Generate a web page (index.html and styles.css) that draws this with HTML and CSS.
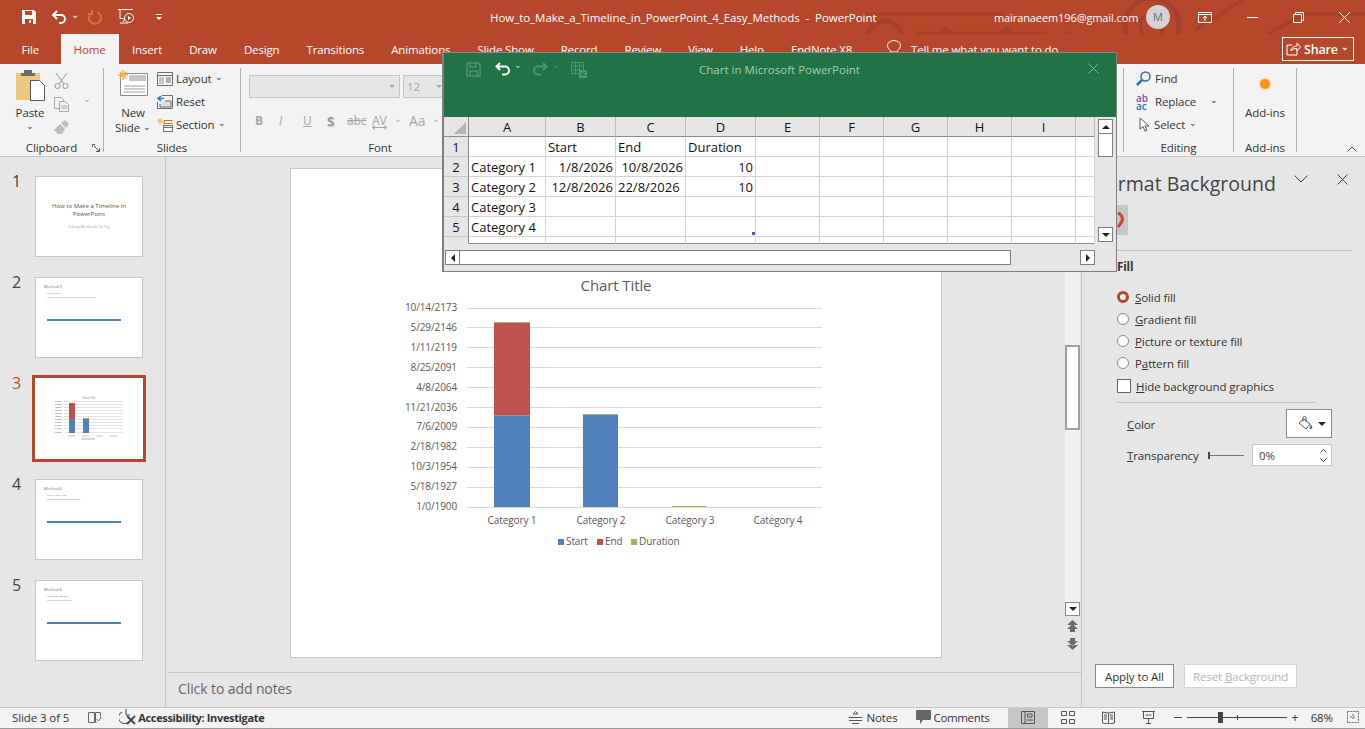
FILE: index.html
```html
<!DOCTYPE html>
<html lang="en">

<head>
  <meta charset="UTF-8" />
  <title>How_to_Make_a_Timeline_in_PowerPoint_4_Easy_Methods - PowerPoint</title>
  <link rel="stylesheet" href="styles.css">
</head>

<body>
  <header class="titlebar">
    <svg class="circuit" width="500" height="64" viewBox="0 0 500 64" fill="none" stroke="#a5402a" stroke-width="3">
      <circle cx="287" cy="25" r="27" stroke-width="5" />
      <circle cx="287" cy="25" r="12" />
      <circle cx="20" cy="38" r="17" stroke-width="5" />
      <path d="M0 14H140M52 33H180M180 33l17 17h80M240 44h50M330 30L390 -8M300 52L370 52L440 14H500M200 33h8" />
      <circle cx="141" cy="33" r="4" />
      <circle cx="81" cy="33" r="4" />
    </svg>
    <div class="qat">
      <svg width="16" height="16" viewBox="0 0 16 16"><path d="M1 1h12l2 2v12H1z" fill="#fff" /><path d="M4 2h7v4H4zM4 10h8v5H4z" fill="#b7472a" /><path d="M8 11h2v3H8z" fill="#fff" /></svg>
      <svg class="qat-undo" width="16" height="16" viewBox="0 0 16 16" fill="none" stroke="#fff" stroke-width="2"><path d="M6 2L2 6l4 4M2 6h8a4 4 0 0 1 0 8H8" /></svg>
      <span class="caret-w">⌄</span>
      <svg class="qat-redo" width="16" height="16" viewBox="0 0 16 16" fill="none" stroke="#e0694a" stroke-width="2"><path d="M11 3.500a6 6 0 1 1-6 0M5 1v4H1" /></svg>
      <svg class="qat-show" width="18" height="18" viewBox="0 0 18 18" fill="none" stroke="#fff"><path d="M0 1.500h15M2 1.500v9h5M5 14l2-3" /><circle cx="11" cy="10" r="4.500" /><path d="M10 8v4l3-2z" fill="#fff" stroke="none" /><path d="M2 15h8" /></svg>
      <svg class="qat-more" width="8" height="8" viewBox="0 0 8 8" fill="#fff"><path d="M1 1h6v1H1zM1 4h6L4 7z" /></svg>
    </div>
    <div class="doc-title">How_to_Make_a_Timeline_in_PowerPoint_4_Easy_Methods &nbsp;-&nbsp; PowerPoint</div>
    <div class="account">mairanaeem196@gmail.com</div>
    <div class="avatar">M</div>
    <div class="window-btns">
      <svg width="14" height="11" viewBox="0 0 14 11" fill="none" stroke="#fff"><path d="M.5.500h13v10H.5zM.5 2.500h13M7 9V4.500M5 6l2-2 2 2" /></svg>
      <svg width="11" height="11" viewBox="0 0 11 11" stroke="#fff"><path d="M0 5.500h11" /></svg>
      <svg width="11" height="11" viewBox="0 0 11 11" fill="none" stroke="#fff"><path d="M.5 2.500h8v8h-8zM2.500 2.500v-2h8v8h-2" /></svg>
      <svg width="11" height="11" viewBox="0 0 11 11" stroke="#fff"><path d="M0 0l11 11M11 0L0 11" /></svg>
    </div>
  </header>

  <nav class="tabs">
    <span class="tab tab-file">File</span>
    <span class="tab tab-home">Home</span>
    <span class="tab">Insert</span>
    <span class="tab">Draw</span>
    <span class="tab">Design</span>
    <span class="tab">Transitions</span>
    <span class="tab">Animations</span>
    <span class="tab">Slide Show</span>
    <span class="tab">Record</span>
    <span class="tab">Review</span>
    <span class="tab">View</span>
    <span class="tab">Help</span>
    <span class="tab">EndNote X8</span>
    <svg class="bulb" width="16" height="18" viewBox="0 0 16 18" fill="none" stroke="#fff"><path d="M5 12c0-2-3.500-3-3.500-6.500a6.500 5 0 0 1 13 0C14.500 9 11 10 11 12zM6 15h4" /></svg>
    <span class="tell">Tell me what you want to do</span>
    <span class="share">
      <svg width="15" height="14" viewBox="0 0 15 14" fill="none" stroke="#fff"><path d="M6 3H1v10h10V8M5 9c0-3 3-5 6-5V1l3.500 4L11 9V6.500C8 6.500 6 7 5 9z" /></svg>
      Share <span class="share-caret">⌄</span>
    </span>
  </nav>

  <section class="ribbon">
    <div class="group group-clipboard">
      <div class="group-body">
        <div class="big-btn paste">
          <svg width="30" height="32" viewBox="0 0 30 32"><path d="M1 4h24v27H1z" fill="#eec77f" /><path d="M9 1h8v3h3v3H6V4h3z" fill="#6b6b6b" /><path d="M15.500 11.500h9l5 5v15h-14z" fill="#fff" stroke="#555" /></svg>
          <span>Paste</span>
          <span class="caret">⌄</span>
        </div>
        <div class="tool-col">
          <svg width="15" height="16" viewBox="0 0 15 16" fill="none" stroke="#a9a9a9" stroke-width="1.200"><circle cx="3.500" cy="13" r="2.500" /><circle cx="11.500" cy="13" r="2.500" /><path d="M2 0l8 11M13 0L5 11" /></svg>
          <svg width="15" height="15" viewBox="0 0 15 15" fill="#f3f3f3" stroke="#a9a9a9"><path d="M.5.500h7l2 2v9h-9z" /><path d="M5.500 4.500h6l3 3v7h-9z" /><path d="M7 9h6M7 11h6" /></svg>
          <svg width="15" height="15" viewBox="0 0 15 15" fill="#bdbdbd"><path d="M0 10l6-6 5 5-3 5H4zM7 3l4-3 4 4-3 4z" /></svg>
        </div>
        <span class="copy-caret">⌄</span>
      </div>
      <div class="group-label">Clipboard
        <svg class="launcher" width="8" height="8" viewBox="0 0 8 8" fill="none" stroke="#555"><path d="M.5 3V.5H3M2 2l5 5M7.500 4v3.500H4" /></svg>
      </div>
    </div>

    <div class="group group-slides">
      <div class="group-body">
        <div class="big-btn new-slide">
          <svg width="32" height="28" viewBox="0 0 32 28"><path d="M3.500 4.500h27v22h-27z" fill="#fff" stroke="#8a8a8a" /><path d="M12 6h17v6H12z" fill="#c6c6c6" /><path d="M7 17h21M7 20h21M7 23h21" stroke="#9a9a9a" /><path d="M1 6h10M6 1v10M2.500 2.500l7 7M9.500 2.500l-7 7" stroke="#f2b84b" stroke-width="1.500" /></svg>
          <span>New</span>
          <span>Slide <span class="caret-inline">⌄</span></span>
        </div>
        <div class="small-col">
          <div class="small-btn">
            <svg width="16" height="14" viewBox="0 0 16 14" fill="none" stroke="#6b6b6b"><path d="M.5.500h15v13H.5zM.5 3.500h15" /><path d="M2 5h5v7H2z" fill="#c6c6c6" stroke="none" /><path d="M9 6h5M9 8h5M9 10h5" /></svg>
            Layout <span class="caret-inline">⌄</span>
          </div>
          <div class="small-btn">
            <svg width="16" height="14" viewBox="0 0 16 14" fill="none" stroke="#6b6b6b"><path d="M5 .500h10.500v13H.5V7" /><path d="M8 6h6v6H3V9" fill="#e0e0e0" /><path d="M4 1L1 3.500 4 6M1 3.500h6" stroke="#2f79c4" stroke-width="1.500" /></svg>
            Reset
          </div>
          <div class="small-btn">
            <svg width="16" height="14" viewBox="0 0 16 14" fill="none"><path d="M0 3h6M3 0v6M1 1l4 4M5 1L1 5" stroke="#f2b84b" /><path d="M7 2.500h8.500M7 2.500v3h8.500" stroke="#d56a1f" /><path d="M6.500 7.500h9v6h-9zM6.500 9.500h9" stroke="#6b6b6b" /></svg>
            Section <span class="caret-inline">⌄</span>
          </div>
        </div>
      </div>
      <div class="group-label">Slides</div>
    </div>

    <div class="group group-font">
      <div class="font-boxes">
        <div class="font-box font-name"><span class="box-arrow"></span></div>
        <div class="font-box font-size">12<span class="box-arrow"></span></div>
      </div>
      <div class="font-tools">
        <b>B</b><i>I</i><u>U</u><b class="tool-s">S</b><s class="tool-abc">abc</s>
        <span class="tool-av">AV<svg width="15" height="5" viewBox="0 0 15 5" fill="none" stroke="#a6a6a6"><path d="M0 2.500h15M3 .500l-3 2 3 2M12 .500l3 2-3 2" /></svg></span>
        <span class="grey-caret">⌄</span><span class="tool-aa">Aa</span><span class="grey-caret">⌄</span>
      </div>
      <div class="group-label">Font</div>
    </div>

    <div class="group group-hidden"></div>

    <div class="group group-editing">
      <div class="small-col editing-col">
        <div class="small-btn">
          <svg width="15" height="15" viewBox="0 0 15 15" fill="none" stroke="#2f6fb0" stroke-width="1.500"><circle cx="9.500" cy="5.500" r="4.500" /><path d="M6 9l-5 5" stroke-width="2.500" /></svg>
          Find
        </div>
        <div class="small-btn">
          <span class="replace-icon"><span class="re-ab">ab</span><span class="re-ac">ac</span></span>
          Replace <span class="caret-inline replace-caret">⌄</span>
        </div>
        <div class="small-btn select-btn">
          <svg width="11" height="15" viewBox="0 0 11 15" fill="#fff" stroke="#555"><path d="M1 1v11l3-2.500 2 4.500 2-1-2-4h4z" /></svg>
          Select <span class="caret-inline">⌄</span>
        </div>
      </div>
      <div class="group-label">Editing</div>
    </div>

    <div class="group group-addins">
      <div class="big-btn addins">
        <span class="addin-dot"></span>
        <span>Add-ins</span>
      </div>
      <div class="group-label">Add-ins</div>
    </div>

    <svg class="collapse" width="10" height="6" viewBox="0 0 10 6" fill="none" stroke="#444"><path d="M.5 5.500L5 1l4.500 4.500" /></svg>
  </section>

  <main class="workspace">
    <aside class="thumbs">
      <div class="thumb-row">
        <span class="thumb-num">1</span>
        <div class="thumb thumb-title">
          <p class="t-head">How to Make a Timeline in PowerPoint</p>
          <p class="t-sub">4 Easy Methods To Try</p>
        </div>
      </div>
      <div class="thumb-row">
        <span class="thumb-num">2</span>
        <div class="thumb thumb-method">
          <p class="m-head">Method 3</p>
          <p class="m-body">Start Slides<br>Use a timeline to schedule task overviews</p>
          <div class="m-line"></div>
        </div>
      </div>
      <div class="thumb-row row-active">
        <span class="thumb-num">3</span>
        <div class="thumb thumb-chart">
          <svg width="108" height="81" viewBox="0 0 108 81">
            <text x="54" y="21" font-size="3" text-anchor="middle" fill="#777">Chart Title</text>
            <path d="M29 23.500h59M29 26.500h59M29 29.500h59M29 32.500h59M29 35.500h59M29 38.500h59M29 41.500h59M29 44.500h59M29 47.500h59M29 50.500h59M29 54.500h59" stroke="#e4e4e4" />
            <path d="M20 23.500h7M20 26.500h7M20 29.500h7M20 32.500h7M20 35.500h7M20 38.500h7M20 41.500h7M20 44.500h7M20 47.500h7M20 50.500h7M20 54.500h7" stroke="#c4c4c4" />
            <rect x="34" y="41" width="6" height="14" fill="#4f81bd" />
            <rect x="34" y="25" width="6" height="16" fill="#c0504d" />
            <rect x="48" y="41" width="6" height="14" fill="#4f81bd" />
            <rect x="48" y="40" width="6" height="1" fill="#9bbb59" />
            <path d="M33 58h7M47 58h7M61 58h7M75 58h7" stroke="#c4c4c4" />
            <path d="M46 61h14" stroke="#aab" />
          </svg>
        </div>
      </div>
      <div class="thumb-row">
        <span class="thumb-num">4</span>
        <div class="thumb thumb-method">
          <p class="m-head">Method 4</p>
          <p class="m-body">Gantt Chart View<br>Show tasks and dates clearly</p>
          <div class="m-line"></div>
        </div>
      </div>
      <div class="thumb-row">
        <span class="thumb-num">5</span>
        <div class="thumb thumb-method">
          <p class="m-head">Method 4</p>
          <p class="m-body">Use Chart Option<br>Display start and end</p>
          <div class="m-line"></div>
        </div>
      </div>
    </aside>

    <div class="center">
      <div class="stage">
        <div class="slide">
          <svg class="chart" width="650" height="488" viewBox="291 169 650 488">
            <text class="chart-title" x="616" y="291" text-anchor="middle">Chart Title</text>
            <g stroke="#d9d9d9">
              <path d="M467 308.500h355M467 327.500h355M467 347.500h355M467 367.500h355M467 387.500h355M467 407.500h355M467 427.500h355M467 447.500h355M467 467.500h355M467 487.500h355M467 507.500h355" />
            </g>
            <g class="axis" text-anchor="end">
              <text x="457" y="311">10/14/2173</text>
              <text x="457" y="331">5/29/2146</text>
              <text x="457" y="351">1/11/2119</text>
              <text x="457" y="371">8/25/2091</text>
              <text x="457" y="391">4/8/2064</text>
              <text x="457" y="411">11/21/2036</text>
              <text x="457" y="430">7/6/2009</text>
              <text x="457" y="450">2/18/1982</text>
              <text x="457" y="470">10/3/1954</text>
              <text x="457" y="490">5/18/1927</text>
              <text x="457" y="510">1/0/1900</text>
            </g>
            <rect x="494" y="415.500" width="36" height="91.500" fill="#4f81bd" />
            <rect x="494" y="323" width="36" height="92.500" fill="#c0504d" />
            <rect x="494" y="322" width="36" height="1" fill="#9bbb59" />
            <rect x="583" y="415" width="35" height="92" fill="#4f81bd" />
            <rect x="583" y="414" width="35" height="1" fill="#9bbb59" />
            <rect x="672" y="506" width="35" height="1" fill="#9bbb59" />
            <g class="axis" text-anchor="middle">
              <text x="512" y="524">Category 1</text>
              <text x="601" y="524">Category 2</text>
              <text x="690" y="524">Category 3</text>
              <text x="778" y="524">Category 4</text>
            </g>
            <rect x="558" y="539" width="6" height="6" fill="#4f81bd" />
            <rect x="597" y="539" width="6" height="6" fill="#c0504d" />
            <rect x="631" y="539" width="6" height="6" fill="#9bbb59" />
            <g class="axis">
              <text x="566" y="545">Start</text>
              <text x="605" y="545">End</text>
              <text x="639" y="545">Duration</text>
            </g>
          </svg>
        </div>
        <div class="vscroll">
          <div class="vtrack"><div class="vthumb"></div></div>
          <div class="varrow"><span class="tri-down"></span></div>
          <svg class="page-btn" width="11" height="13" viewBox="0 0 11 13" fill="#6b6b6b"><path d="M5.500 0L11 5H0zM5.500 4L11 9H8v3H3V9H0z" /></svg>
          <svg class="page-btn" width="11" height="13" viewBox="0 0 11 13" fill="#6b6b6b"><path d="M3 1h5v3h3L5.500 9 0 4h3zM0 8l5.500 5L11 8z" /></svg>
        </div>
      </div>
      <div class="notes">Click to add notes</div>
    </div>

    <aside class="pane">
      <div class="pane-head">
        <span class="pane-title">Format Background</span>
        <svg class="pane-chev" width="14" height="8" viewBox="0 0 14 8" fill="none" stroke="#444"><path d="M.5.500L7 7 13.500.500" /></svg>
        <svg class="pane-close" width="11" height="11" viewBox="0 0 11 11" stroke="#444"><path d="M.5.500l10 10M10.500.500l-10 10" /></svg>
      </div>
      <div class="pane-tab">
        <svg width="8" height="16" viewBox="0 0 8 16" fill="none" stroke="#c8482a" stroke-width="3"><path d="M1 1c4 2 5 5 4 8-1 2-2 4-4 6" /></svg>
      </div>
      <div class="pane-rule"></div>
      <div class="fill-head">Fill</div>
      <div class="fill-options">
        <label class="opt"><span class="radio radio-on"></span><span><u>S</u>olid fill</span></label>
        <label class="opt"><span class="radio"></span><span><u>G</u>radient fill</span></label>
        <label class="opt"><span class="radio"></span><span><u>P</u>icture or texture fill</span></label>
        <label class="opt"><span class="radio"></span><span>P<u>a</u>ttern fill</span></label>
        <label class="opt opt-check"><span class="check"></span><span><u>H</u>ide background graphics</span></label>
      </div>
      <div class="pane-rule rule-short"></div>
      <div class="color-row">
        <span class="color-label"><u>C</u>olor</span>
        <span class="color-btn">
          <svg width="15" height="15" viewBox="0 0 15 15" fill="#fff" stroke="#555"><path d="M1 7l5-4 6 5-4 5z" /><path d="M5 5V2a1.500 1.500 0 0 1 3 0v4" fill="none" /><path d="M12.500 8l2 3-1 2h-2z" fill="#2f79c4" stroke="none" /></svg>
          <span class="tri-down"></span>
        </span>
      </div>
      <div class="trans-row">
        <span class="trans-label"><u>T</u>ransparency</span>
        <span class="slider"></span>
        <span class="spin">0%<span class="spin-arrows"><svg width="7" height="4" viewBox="0 0 7 4" fill="none" stroke="#444"><path d="M.5 3.500l3-3 3 3" /></svg><svg width="7" height="4" viewBox="0 0 7 4" fill="none" stroke="#444"><path d="M.5.500l3 3 3-3" /></svg></span></span>
      </div>
      <div class="pane-actions">
        <span class="btn btn-apply">App<u>l</u>y to All</span>
        <span class="btn btn-off">Reset <u>B</u>ackground</span>
      </div>
    </aside>
  </main>

  <footer class="statusbar">
    <span class="slide-count">Slide 3 of 5</span>
    <svg class="st-book" width="14" height="13" viewBox="0 0 14 13" fill="none" stroke="#666"><path d="M6.500 1.500H.5v10h6zM7.500 1.500h5v4M7.500 1.500v10h1M8.500 8l2 2 3-4" /></svg>
    <svg class="st-access" width="17" height="16" viewBox="0 0 17 16" fill="none" stroke="#444"><path d="M7 0v6M3 3a6 6 0 0 0 5 11" /><path d="M7 6h4" /><path d="M8 7l8 8M16 7l-8 8" stroke-width="1.800" /></svg>
    <b class="st-investigate">Accessibility: Investigate</b>
    <span class="st-right">
      <span class="st-item st-notes">
        <svg width="13" height="13" viewBox="0 0 13 13" stroke="#555" fill="none"><path d="M4 3l2.500-2.500L9 3zM0 6.500h13M0 9.500h13M3 12.500h7" /></svg>
        Notes
      </span>
      <span class="st-item st-comments">
        <svg width="15" height="15" viewBox="0 0 15 15" fill="#666"><path d="M1 0h13a1 1 0 0 1 1 1v8a1 1 0 0 1-1 1H7l-3 4v-4H1a1 1 0 0 1-1-1V1a1 1 0 0 1 1-1z" /></svg>
        Comments
      </span>
      <span class="view view-on"><svg width="14" height="13" viewBox="0 0 14 13" fill="none" stroke="#555"><path d="M.5.500h13v12H.5zM4 .500v12M6.500 3h4.500v3H6.500zM6 9h6" /></svg></span>
      <span class="view"><svg width="14" height="13" viewBox="0 0 14 13" fill="none" stroke="#555"><path d="M.5.500h5v4h-5zM8.500.500h5v4h-5zM.5 8.500h5v4h-5zM8.500 8.500h5v4h-5z" /></svg></span>
      <span class="view"><svg width="13" height="13" viewBox="0 0 13 13" fill="none" stroke="#555"><path d="M.5 1l6 1 6-1v11l-6 1-6-1zM6.500 2v11M2 4h3M2 6h3M2 8h3M8 4h3M8 6h3M8 8h3" /></svg></span>
      <span class="view"><svg width="13" height="13" viewBox="0 0 13 13" fill="none" stroke="#555"><path d="M0 .500h13M1.500 .500v7h10v-7M3.500 4h6M6.500 7.500v5M4 12.500h5" /></svg></span>
      <span class="zoom-minus"></span>
      <span class="zoom-track"><span class="zoom-knob"></span><span class="zoom-tick"></span></span>
      <span class="zoom-plus">+</span>
      <span class="zoom-val">68%</span>
      <svg class="zoom-fit" width="12" height="12" viewBox="0 0 12 12" fill="none" stroke="#666"><path d="M.5.500h11v11H.5zM3 6h6M6 3v6" stroke-dasharray="2 1" /></svg>
    </span>
  </footer>

  <div class="xl-window">
    <div class="xl-title">
      <svg width="15" height="15" viewBox="0 0 15 15" fill="none" stroke="#4f9470" stroke-width="1.500"><path d="M1 1h11l2 2v11H1zM4 1v4h6V1M4 14V9h7v5" /></svg>
      <svg class="xl-undo" width="15" height="14" viewBox="0 0 15 14" fill="none" stroke="#fff" stroke-width="2"><path d="M5 1L1.500 4.500 5 8M2 4.500h8a4 4 0 0 1 0 8H7" /></svg>
      <span class="xl-caret xl-caret-on">⌄</span>
      <svg width="15" height="14" viewBox="0 0 15 14" fill="none" stroke="#4f9470" stroke-width="2"><path d="M10 1l3.500 3.500L10 8M13 4.500H5a4 4 0 0 0 0 8h3" /></svg>
      <span class="xl-caret">⌄</span>
      <svg class="xl-grid-icon" width="16" height="16" viewBox="0 0 16 16" fill="none" stroke="#4f9470"><path d="M.5.500h12v11H.5zM.5 4h12M.5 8h8M4.500 .500v11M8.500 .500v11" /><path d="M8 8h8v8H8z" fill="#4f9470" stroke="none" /><path d="M10 10l4 4M14 10l-4 4" stroke="#217346" /></svg>
      <span class="xl-name">Chart in Microsoft PowerPoint</span>
      <svg class="xl-close" width="11" height="11" viewBox="0 0 11 11" stroke="#7fb69a"><path d="M.5.500l10 10M10.500.500l-10 10" /></svg>
    </div>
    <div class="xl-body">
      <table class="sheet">
        <colgroup>
          <col class="c-row"><col class="c-a"><col class="c-bd"><col class="c-bd"><col class="c-bd"><col class="c-e"><col class="c-e"><col class="c-e"><col class="c-e"><col class="c-e"><col class="c-j">
        </colgroup>
        <tr class="head">
          <th class="corner"><span class="corner-tri"></span></th><th>A</th><th>B</th><th>C</th><th>D</th><th>E</th><th>F</th><th>G</th><th>H</th><th>I</th><th></th>
        </tr>
        <tr><th>1</th><td></td><td>Start</td><td>End</td><td>Duration</td><td></td><td></td><td></td><td></td><td></td><td></td></tr>
        <tr><th>2</th><td>Category 1</td><td class="num">1/8/2026</td><td class="num">10/8/2026</td><td class="num">10</td><td></td><td></td><td></td><td></td><td></td><td></td></tr>
        <tr><th>3</th><td>Category 2</td><td class="num">12/8/2026</td><td>22/8/2026</td><td class="num">10</td><td></td><td></td><td></td><td></td><td></td><td></td></tr>
        <tr><th>4</th><td>Category 3</td><td></td><td></td><td></td><td></td><td></td><td></td><td></td><td></td><td></td></tr>
        <tr><th>5</th><td>Category 4</td><td></td><td></td><td class="range-end"></td><td></td><td></td><td></td><td></td><td></td><td></td></tr>
        <tr class="cut"><th></th><td></td><td></td><td></td><td></td><td></td><td></td><td></td><td></td><td></td><td></td></tr>
      </table>
      <div class="xl-vscroll">
        <div class="xl-btn"><span class="tri-up"></span></div>
        <div class="xl-vthumb"></div>
        <div class="xl-btn xl-btn-end"><span class="tri-down"></span></div>
      </div>
    </div>
    <div class="xl-hscroll">
      <div class="xl-btn"><span class="tri-left"></span></div>
      <div class="xl-hthumb"></div>
      <div class="xl-btn xl-btn-end"><span class="tri-right"></span></div>
    </div>
  </div>
</body>

</html>
```

FILE: styles.css
```css
body {
  margin: 0;
  width: 1365px;
  height: 729px;
  overflow: hidden;
  position: relative;
  display: flex;
  flex-direction: column;
  background: #e6e6e6;
  font-family: "Open Sans", "Noto Sans", sans-serif;
  font-size: 11.5px;
  letter-spacing: -0.1px;
  color: #333;
}

p {
  margin: 0;
}

/* title bar */
.titlebar {
  position: relative;
  height: 34px;
  display: flex;
  align-items: center;
  background: #b7472a;
  color: #fff;
}

.circuit {
  position: absolute;
  top: 0;
  left: 865px;
}

.qat {
  width: 490px;
  flex: none;
  display: flex;
  align-items: center;
  padding-left: 21px;
  box-sizing: border-box;
  position: relative;
}

.qat-undo {
  margin-left: 14px;
}

.caret-w {
  margin: -6px 0 0 4px;
  font-size: 10px;
}

.qat-redo {
  margin-left: 8px;
}

.qat-show {
  margin-left: 15px;
}

.qat-more {
  margin-left: 19px;
}

.doc-title {
  position: relative;
  width: 504px;
  flex: none;
  white-space: nowrap;
  letter-spacing: -0.04px;
}

.account {
  position: relative;
  width: 152px;
  flex: none;
  font-size: 11px;
}

.avatar {
  position: relative;
  width: 24px;
  height: 24px;
  flex: none;
  border-radius: 50%;
  background: #d3d3d3;
  color: #6f6f7f;
  font-size: 11px;
  line-height: 24px;
  text-align: center;
}

.window-btns {
  position: relative;
  display: flex;
  align-items: center;
  gap: 35px;
  margin-left: 28px;
}

/* tabs */
.tabs {
  position: relative;
  height: 30px;
  display: flex;
  align-items: flex-end;
  background: #b7472a;
  color: #fff;
  letter-spacing: -0.15px;
}

.tab {
  padding: 0 13.5px;
  height: 30px;
  line-height: 31px;
  position: relative;
}

.tab-file {
  margin: 0 8px 0 8px;
}

.tab-home {
  padding: 0 13px;
  margin-right: 0;
  background: #f3f3f3;
  color: #b7472a;
}

.bulb {
  position: absolute;
  left: 886px;
  top: 6px;
}

.tell {
  position: absolute;
  left: 911px;
  top: 0;
  line-height: 31px;
}

.share {
  position: absolute;
  left: 1282px;
  top: 3px;
  width: 72px;
  height: 24px;
  box-sizing: border-box;
  border: 1px solid #fff;
  display: flex;
  align-items: center;
  gap: 3px;
  padding-left: 3px;
  font-size: 12.5px;
  font-weight: 600;
}

.share-caret {
  font-size: 9px;
  margin-top: -5px;
}

/* ribbon */
.ribbon {
  position: relative;
  height: 93px;
  flex: none;
  box-sizing: border-box;
  display: flex;
  background: #f3f3f3;
  border-bottom: 1px solid #c6c6c6;
  padding: 0 68px 4px 0;
}

.group {
  box-sizing: border-box;
  margin-top: 4px;
  display: flex;
  flex-direction: column;
  border-right: 1px solid #b1b1b1;
  position: relative;
}

.group-body {
  flex: 1;
  display: flex;
  min-height: 0;
}

.group-label {
  height: 16px;
  margin-bottom: -4px;
  text-align: center;
  line-height: 16px;
  position: relative;
}

.launcher {
  position: absolute;
  right: 3px;
  top: 4px;
}

.big-btn {
  display: flex;
  flex-direction: column;
  align-items: center;
  line-height: 15px;
  white-space: nowrap;
}

.big-btn svg {
  margin-bottom: 4px;
}

.caret,
.caret-inline {
  font-size: 9px;
}

.caret {
  line-height: 11px;
}

.caret-inline {
  position: relative;
  top: -2px;
}

.group-clipboard {
  width: 104px;
}

.paste {
  margin: 1px 0 0 14px;
  width: 32px;
}

.tool-col {
  margin: 5px 0 0 8px;
  display: flex;
  flex-direction: column;
  gap: 8px;
}

.copy-caret {
  margin: 24px 0 0 14px;
  font-size: 9px;
  color: #999;
}

.group-slides {
  width: 137px;
}

.new-slide {
  margin: 1px 0 0 13px;
  width: 32px;
}

.new-slide svg {
  margin-bottom: 8px;
}

.small-col {
  margin: 2px 0 0 8px;
  display: flex;
  flex-direction: column;
  gap: 6px;
}

.small-btn {
  height: 17px;
  display: flex;
  align-items: center;
  gap: 3px;
  white-space: nowrap;
}

.group-font {
  width: 270px;
  padding-left: 8px;
  border-right: none;
}

.font-boxes {
  display: flex;
  gap: 3px;
  margin-top: 7px;
}

.font-box {
  position: relative;
  height: 23px;
  box-sizing: border-box;
  background: #e6e6e6;
  border: 1px solid #c6c6c6;
  color: #a6a6a6;
  line-height: 21px;
  padding-left: 3px;
}

.font-name {
  width: 151px;
}

.font-size {
  width: 44px;
}

.box-arrow {
  position: absolute;
  right: 4px;
  top: 9px;
  border: 3px solid transparent;
  border-top-color: #a6a6a6;
}

.font-tools {
  flex: 1;
  display: flex;
  align-items: center;
  padding: 3px 0 0 6px;
  color: #a6a6a6;
  font-size: 12px;
  white-space: nowrap;
}

.font-tools > * {
  width: 24px;
  flex: none;
}

.font-tools .tool-s {
  width: 20px;
  color: #9a9a9a;
  font-size: 13px;
  text-shadow: 1px 1px 1px #c6c6c6;
}

.font-tools .tool-abc {
  width: 25px;
}

.font-tools .tool-av {
  position: relative;
  width: 22px;
}

.tool-av svg {
  position: absolute;
  left: 0;
  top: 13px;
}

.font-tools .tool-aa {
  width: 23px;
  font-size: 14px;
}

.font-tools .grey-caret {
  width: 15px;
  font-size: 9px;
  margin-top: -5px;
}

.group-hidden {
  flex: 1;
}

.group-editing {
  width: 110px;
}

.editing-col {
  flex: 1;
  margin-left: 12px;
}

.editing-col .small-btn {
  gap: 4px;
}

.replace-icon {
  width: 15px;
  display: flex;
  flex-direction: column;
  font-size: 10px;
  font-weight: 600;
  line-height: 8px;
}

.re-ab {
  color: #7a4fa6;
}

.re-ac {
  color: #2f6fb0;
}

.replace-caret {
  margin-left: 10px;
}

.select-btn {
  margin-left: 3px;
}

.group-addins {
  width: 63px;
}

.addins {
  flex: 1;
  padding-top: 11px;
}

.addin-dot {
  width: 10px;
  height: 10px;
  margin-bottom: 16px;
  border-radius: 50%;
  background: #f7941d;
  box-shadow: 0 0 3px #fbb040;
}

.collapse {
  position: absolute;
  left: 1347px;
  top: 82px;
}

/* main area */
.workspace {
  flex: 1;
  min-height: 0;
  display: flex;
}

.thumbs {
  width: 166px;
  box-sizing: border-box;
  flex: none;
  border-right: 1px solid #c6c6c6;
  padding-top: 19px;
  display: flex;
  flex-direction: column;
  gap: 20px;
}

.thumb-row {
  display: flex;
  padding-left: 12px;
}

.thumb-num {
  width: 23px;
  margin-top: -5px;
  font-size: 16px;
  line-height: 20px;
  color: #444;
}

.thumb {
  width: 108px;
  height: 81px;
  box-sizing: border-box;
  background: #fff;
  border: 1px solid #c6c6c6;
  overflow: hidden;
}

.row-active {
  margin: -3px 0;
}

.row-active .thumb-num {
  color: #c8482a;
  margin-top: -2px;
}

.row-active .thumb {
  width: 114px;
  height: 87px;
  margin-left: -3px;
  border: 3px solid #b7472a;
}

.row-active .thumb svg {
  display: block;
}

.thumb-title {
  padding-top: 25px;
  text-align: center;
}

.t-head {
  font-size: 6px;
  line-height: 8px;
  padding: 0 10px;
  color: #555;
  letter-spacing: 0;
}

.t-sub {
  margin-top: 6px;
  font-size: 4px;
  line-height: 5px;
  color: #999;
  letter-spacing: 0;
}

.thumb-method {
  padding: 6px 0 0 8px;
}

.m-head {
  font-size: 4px;
  line-height: 5px;
  color: #7a6a7a;
  letter-spacing: 0;
}

.m-body {
  margin: 2px 0 0 3px;
  font-size: 2.500px;
  line-height: 4px;
  color: #888;
  letter-spacing: 0;
}

.m-line {
  width: 74px;
  height: 2px;
  margin: 20px 0 0 3px;
  background: #4f81bd;
}

.center {
  flex: 1;
  min-width: 0;
  display: flex;
  flex-direction: column;
}

.stage {
  height: 515px;
  flex: none;
  display: flex;
  box-sizing: border-box;
  padding: 11px 0 0 124px;
}

.slide {
  width: 652px;
  height: 490px;
  box-sizing: border-box;
  background: #fff;
  border: 1px solid #c6c6c6;
}

.chart {
  display: block;
  font-family: "Open Sans", sans-serif;
}

.chart-title {
  font-size: 15px;
  fill: #595959;
}

.axis {
  font-size: 10px;
  fill: #595959;
}

.vscroll {
  width: 15px;
  margin: -11px 0 0 123px;
  display: flex;
  flex-direction: column;
  align-items: center;
}

.vtrack {
  width: 15px;
  height: 445px;
  flex: none;
  box-sizing: border-box;
  padding-top: 188px;
  background: #f0f0f0;
}

.vthumb {
  width: 15px;
  height: 85px;
  box-sizing: border-box;
  background: #fff;
  border: 2px solid #a0a0a0;
}

.varrow {
  width: 15px;
  height: 14px;
  box-sizing: border-box;
  background: #fff;
  border: 1px solid #8a8a8a;
  display: flex;
  align-items: center;
  justify-content: center;
}

.page-btn {
  margin-top: 4px;
}

.tri-down,
.tri-up,
.tri-left,
.tri-right {
  width: 0;
  height: 0;
  border: 4px solid transparent;
}

.tri-down {
  border-top-color: #222;
  margin-top: 4px;
}

.tri-up {
  border-bottom-color: #222;
  margin-bottom: 4px;
}

.tri-left {
  border-right-color: #222;
  margin-right: 4px;
}

.tri-right {
  border-left-color: #222;
  margin-left: 4px;
}

.notes {
  flex: 1;
  margin-left: 2px;
  border-top: 1px solid #c6c6c6;
  padding-left: 10px;
  font-size: 14px;
  line-height: 31px;
  color: #666;
}

/* format pane */
.pane {
  width: 284px;
  flex: none;
  box-sizing: border-box;
  display: flex;
  flex-direction: column;
  border-left: 1px solid #c6c6c6;
}

.pane-head {
  height: 48px;
  display: flex;
  align-items: center;
  padding: 0 17px 0 14px;
  flex: none;
}

.pane-title {
  font-size: 19.5px;
  color: #444;
  white-space: nowrap;
  margin-top: 5px;
  letter-spacing: 0;
}

.pane-chev {
  margin: -4px 0 0 auto;
}

.pane-close {
  margin: -4px 0 0 29px;
}

.pane-tab {
  width: 46px;
  height: 30px;
  flex: none;
  background: #c6c6c6;
  display: flex;
  align-items: center;
  justify-content: flex-end;
  padding-right: 3px;
  box-sizing: border-box;
}

.pane-rule {
  height: 1px;
  flex: none;
  margin: 15px 13px 0 34px;
  background: #c6c6c6;
}

.fill-head {
  margin: 8px 0 0 35px;
  font-weight: 700;
  line-height: 16px;
}

.fill-options {
  margin: 14px 0 0 35px;
  display: flex;
  flex-direction: column;
  gap: 6px;
}

.opt {
  height: 16px;
  display: flex;
  align-items: center;
  gap: 6px;
  white-space: nowrap;
}

.radio {
  width: 12px;
  height: 12px;
  box-sizing: border-box;
  border: 1px solid #8a8a8a;
  border-radius: 50%;
  background: #fff;
}

.radio-on {
  border: 3.500px solid #b7472a;
}

.opt-check {
  margin-top: 1px;
}

.check {
  width: 12px;
  height: 12px;
  border: 1px solid #666;
  background: #fff;
  margin-right: -1px;
}

.rule-short {
  margin: 8px 49px 0 35px;
}

.color-row,
.trans-row {
  display: flex;
  align-items: center;
  margin: 6px 0 0 45px;
  width: 205px;
}

.color-row {
  justify-content: space-between;
  height: 29px;
}

.color-label {
  margin-top: 2px;
}

.color-btn {
  width: 46px;
  height: 29px;
  box-sizing: border-box;
  border: 1px solid #8a8a8a;
  background: #fff;
  display: flex;
  align-items: center;
  padding-left: 11px;
  gap: 5px;
}

.trans-row {
  height: 22px;
}

.trans-label {
  width: 70px;
  flex: none;
}

.slider {
  width: 36px;
  height: 7px;
  margin-left: 11px;
  box-sizing: border-box;
  border-left: 2px solid #444;
  background: linear-gradient(#777, #777) center / 100% 1px no-repeat;
}

.spin {
  width: 80px;
  height: 22px;
  box-sizing: border-box;
  margin-left: 8px;
  border: 1px solid #c6c6c6;
  background: #fff;
  display: flex;
  align-items: center;
  justify-content: space-between;
  padding: 0 4px 0 6px;
  color: #444;
}

.spin-arrows {
  display: flex;
  flex-direction: column;
  gap: 5px;
}

.spin-arrows svg {
  display: block;
}

.pane-actions {
  margin: auto 0 19px 13px;
  display: flex;
  gap: 10px;
}

.btn {
  height: 24px;
  box-sizing: border-box;
  padding: 0 8px;
  line-height: 23px;
  background: #fff;
  border: 1px solid #8a8a8a;
  white-space: nowrap;
}

.btn-apply {
  padding: 0 9px;
}

.btn-off {
  border-color: #d4d4d4;
  color: #b5b5b5;
}

/* status bar */
.statusbar {
  height: 22px;
  flex: none;
  box-sizing: border-box;
  display: flex;
  align-items: center;
  background: #f3f3f3;
  border-top: 1px solid #c6c6c6;
  border-bottom: 1px solid #9a9a9a;
  padding: 0 0 2px 12px;
}

.st-book {
  margin-left: 19px;
}

.st-access {
  margin-left: 17px;
}

.st-investigate {
  margin-left: 2px;
  font-size: 11px;
  letter-spacing: -0.35px;
}

.st-right {
  margin-left: auto;
  align-self: stretch;
  display: flex;
  align-items: center;
}

.st-item {
  display: flex;
  align-items: center;
  gap: 5px;
}

.st-notes {
  gap: 4px;
}

.st-comments {
  gap: 3px;
  margin: 0 19px 0 18px;
  letter-spacing: -0.35px;
}

.view {
  width: 40px;
  align-self: stretch;
  margin-bottom: -2px;
  padding-bottom: 2px;
  display: flex;
  align-items: center;
  justify-content: center;
}

.view-on {
  background: #c6c6c6;
}

.zoom-minus {
  width: 8px;
  height: 1px;
  margin-left: 6px;
  background: #444;
}

.zoom-track {
  position: relative;
  width: 100px;
  height: 1px;
  margin-left: 5px;
  background: #444;
}

.zoom-knob {
  position: absolute;
  left: 31px;
  top: -5px;
  width: 5px;
  height: 11px;
  background: #444;
}

.zoom-tick {
  position: absolute;
  left: 50px;
  top: -2px;
  width: 1px;
  height: 5px;
  background: #444;
}

.zoom-plus {
  margin-left: 4px;
  font-size: 13px;
  color: #444;
}

.zoom-val {
  margin-left: 12px;
}

.zoom-fit {
  margin: 0 6px 0 14px;
}

/* excel window on top */
.xl-window {
  position: absolute;
  left: 442px;
  top: 52px;
  width: 675px;
  height: 220px;
  box-sizing: border-box;
  background: #e6e6e6;
  border: 1px solid #7f7f7f;
  border-left-width: 2px;
  border-top-color: #8a8a8a;
  display: flex;
  flex-direction: column;
}

.xl-title {
  height: 64px;
  flex: none;
  display: flex;
  align-items: flex-start;
  padding: 9px 0 0 22px;
  box-sizing: border-box;
  background: #217346;
}

.xl-undo {
  margin-left: 14px;
}

.xl-caret {
  margin: -4px 0 0 4px;
  width: 14px;
  font-size: 9px;
  color: #4f9470;
}

.xl-caret-on {
  width: 19px;
  color: #cfe3d8;
}

.xl-grid-icon {
  margin-left: 5px;
}

.xl-name {
  position: absolute;
  left: 255px;
  top: 9px;
  color: #a3cbb5;
  letter-spacing: 0;
}

.xl-close {
  position: absolute;
  left: 644px;
  top: 10px;
}

.xl-body {
  height: 127px;
  flex: none;
  display: flex;
  overflow: hidden;
}

.sheet {
  width: 651px;
  flex: none;
  table-layout: fixed;
  border-collapse: separate;
  border-spacing: 0;
  background: #fff;
  align-self: flex-start;
  font-size: 13px;
  color: #111;
  letter-spacing: 0;
}

.c-row {
  width: 25px;
}

.c-a {
  width: 77px;
}

.c-bd {
  width: 70px;
}

.c-e {
  width: 64px;
}

.c-j {
  width: 19px;
}

.sheet tr {
  height: 20px;
}

.sheet th {
  padding: 0;
  line-height: 16px;
  font-weight: 400;
  background: #e6e6e6;
  border: solid #c6c6c6;
  border-width: 0 1px 1px 0;
  border-right-color: #8a8a8a;
}

.sheet .head th {
  border-bottom-color: #8a8a8a;
  border-right-color: #bdbdbd;
}

.sheet .head th:first-child {
  border-right-color: #8a8a8a;
}

.sheet td {
  padding: 0 2px;
  line-height: 16px;
  overflow: hidden;
  white-space: nowrap;
  border: solid #d4d4d4;
  border-width: 0 1px 1px 0;
}

.sheet .num {
  text-align: right;
}

.sheet .cut {
  height: 7px;
}

.sheet .cut td,
.sheet .cut th {
  height: 6px;
  padding: 0;
  line-height: 0;
}

.sheet .cut td {
  border-bottom-color: #8a8a8a;
}

.sheet .cut th {
  border-bottom: 1px solid #e6e6e6;
}

.corner {
  position: relative;
}

.corner-tri {
  position: absolute;
  right: 2px;
  bottom: 2px;
  border: 6px solid transparent;
  border-right-color: #b4b4b4;
  border-bottom-color: #b4b4b4;
}

.range-end {
  position: relative;
}

.range-end::after {
  content: "";
  position: absolute;
  right: 0;
  bottom: 1px;
  width: 3px;
  height: 3px;
  background: #4a5ab5;
}

.xl-vscroll {
  width: 15px;
  margin: 2px 0 0 3px;
  display: flex;
  flex-direction: column;
}

.xl-btn {
  width: 15px;
  height: 15px;
  box-sizing: border-box;
  flex: none;
  background: #fff;
  border: 1px solid #7f7f7f;
  display: flex;
  align-items: center;
  justify-content: center;
}

.xl-vthumb {
  height: 23px;
  flex: none;
  box-sizing: border-box;
  background: #fff;
  border: 1px solid #7f7f7f;
  border-top: none;
}

.xl-vscroll .xl-btn-end {
  margin-top: auto;
  margin-bottom: 2px;
}

.xl-hscroll {
  height: 15px;
  margin: 6px 0 0 1px;
  width: 650px;
  flex: none;
  display: flex;
}

.xl-hthumb {
  width: 551px;
  box-sizing: border-box;
  background: #fff;
  border: 1px solid #7f7f7f;
  border-left: none;
}

.xl-hscroll .xl-btn-end {
  margin-left: auto;
}
```
